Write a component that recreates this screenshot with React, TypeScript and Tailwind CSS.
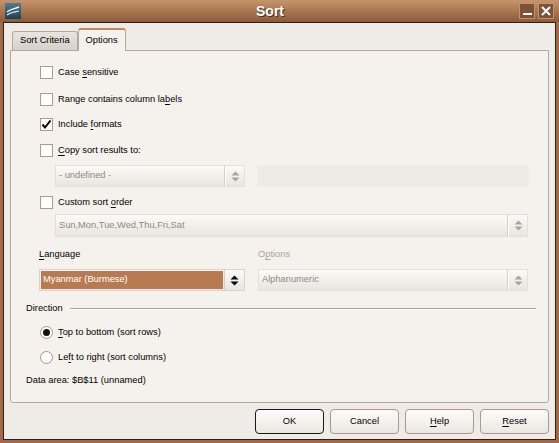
import React from 'react';

const font = { fontFamily: '"Liberation Sans", Arial, sans-serif' };

function U({ children }: { children: React.ReactNode }) {
  return <span className="underline underline-offset-[2px]">{children}</span>;
}

function Checkbox({ checked, children }: { checked?: boolean; children: React.ReactNode }) {
  return (
    <div className="flex items-center h-[13px] ml-[29px]">
      <div className="w-[13px] h-[13px] border border-[#b09a86] bg-white flex items-center justify-center">
        {checked && (
          <svg width="11" height="11" viewBox="0 0 11 11">
            <path d="M1.5 5.5 L4 8.5 L9.5 1.5" stroke="#000" strokeWidth="2" fill="none" />
          </svg>
        )}
      </div>
      <span className="ml-[5px] text-black">{children}</span>
    </div>
  );
}

function Radio({ checked, children }: { checked?: boolean; children: React.ReactNode }) {
  return (
    <div className="flex items-center h-[13px] ml-[29px]">
      <div className="w-[13px] h-[13px] rounded-full border border-[#a89684] bg-white flex items-center justify-center">
        {checked && <div className="w-[7px] h-[7px] rounded-full bg-[#111]" />}
      </div>
      <span className="ml-[5px] text-black">{children}</span>
    </div>
  );
}

function Arrows({ dark }: { dark?: boolean }) {
  const c = dark ? '#000' : '#aaa49c';
  return (
    <svg width="9" height="11" viewBox="0 0 9 11">
      <path d="M4.5 0.5 L8.5 4.5 L0.5 4.5 Z" fill={c} />
      <path d="M4.5 10.5 L8.5 6.5 L0.5 6.5 Z" fill={c} />
    </svg>
  );
}

function Combo({ text, width, height = 22 }: { text: string; width: number; height?: number }) {
  return (
    <div
      className="flex border border-[#e4dfd8] bg-gradient-to-b from-[#fbfaf8] to-[#e9e5e0]"
      style={{ width, height }}
    >
      <div className="flex-1 flex items-center pl-[3px] text-[#8e8982]">{text}</div>
      <div className="w-[19px] border-l border-l-[#ffffff] shadow-[-1px_0_0_#d4cec6] flex items-center justify-center">
        <Arrows />
      </div>
    </div>
  );
}

function Btn({ children, def }: { children: React.ReactNode; def?: boolean }) {
  return (
    <div
      className={`w-[69px] h-[25px] rounded-[4px] border flex items-center justify-center bg-gradient-to-b from-[#fdfcfb] to-[#ebe7e2] text-black ${
        def ? 'border-[#1a1a1a]' : 'border-[#a89a8b]'
      }`}
    >
      {children}
    </div>
  );
}

export default function App() {
  return (
    <div
      className="w-[559px] h-[443px] flex flex-col bg-[#a06a48] text-[9.3px] leading-none"
      style={font}
    >
      {/* title bar */}
      <div className="h-[22px] flex items-center bg-gradient-to-b from-[#c8946c] to-[#8a5a3b] px-[5px]">
        <svg width="16" height="16" viewBox="0 0 16 16">
          <defs>
            <linearGradient id="ic" x1="0" y1="0" x2="0" y2="1">
              <stop offset="0" stopColor="#4f7f90" />
              <stop offset="1" stopColor="#1e4050" />
            </linearGradient>
          </defs>
          <rect x="0" y="0" width="16" height="16" fill="url(#ic)" />
          <path d="M2 9 C5 6 9 6 14 4" stroke="#fff" strokeWidth="1.4" fill="none" />
          <path d="M2 12 C6 9 10 9 14 8" stroke="#dfeaee" strokeWidth="1.2" fill="none" />
        </svg>
        <div className="flex-1 text-center text-white font-bold text-[14px] [text-shadow:1px_1px_0_#4a2e1c]">
          Sort
        </div>
        <div className="flex gap-[3px]">
          <div className="w-[16px] h-[16px] bg-[#7e5236] border border-[#c29272] flex items-end justify-center pb-[3px]">
            <div className="w-[9px] h-[2px] bg-white" />
          </div>
          <div className="w-[16px] h-[16px] bg-[#7e5236] border border-[#c29272] flex items-center justify-center">
            <svg width="10" height="10" viewBox="0 0 10 10">
              <path d="M1 1 L9 9 M9 1 L1 9" stroke="#fff" strokeWidth="2" />
            </svg>
          </div>
        </div>
      </div>

      {/* client area */}
      <div className="flex-1 mx-[3px] mb-[3px] border border-[#2e2018] bg-[#efebe7] flex flex-col px-[6px] pt-[5px]">
        {/* tabs */}
        <div className="flex items-end h-[22px] pl-[2px]">
          <div className="h-[19px] px-[7px] flex items-center border border-[#b3aa9e] border-b-0 rounded-t-[3px] bg-gradient-to-b from-[#e8e4df] to-[#d6d0c9] text-black">
            Sort Criteria
          </div>
          <div className="h-[23px] px-[7px] flex items-center border border-[#b3aa9e] border-t-[2px] border-t-[#c6875e] border-b-0 rounded-t-[3px] bg-[#f5f2ee] text-black -mb-[1px] relative">
            Options
          </div>
        </div>

        {/* panel */}
        <div className="h-[353px] border border-[#b3aa9e] bg-[#f5f2ee] flex flex-col pt-[15px] rounded-b-[3px]">
          <Checkbox>
            Case <U>s</U>ensitive
          </Checkbox>
          <div className="mt-[14px]">
            <Checkbox>
              Range contains column la<U>b</U>els
            </Checkbox>
          </div>
          <div className="mt-[12px]">
            <Checkbox checked>
              Include <U>f</U>ormats
            </Checkbox>
          </div>
          <div className="mt-[13px]">
            <Checkbox>
              <U>C</U>opy sort results to:
            </Checkbox>
          </div>
          <div className="mt-[8px] ml-[44px] flex gap-[12px]">
            <Combo text="- undefined -" width={190} />
            <div className="w-[272px] h-[22px] bg-[#ede9e4] border border-[#f0ede9]" />
          </div>
          <div className="mt-[9px]">
            <Checkbox>
              Custom sort <U>o</U>rder
            </Checkbox>
          </div>
          <div className="mt-[5px] ml-[44px]">
            <Combo text="Sun,Mon,Tue,Wed,Thu,Fri,Sat" width={473} height={23} />
          </div>
          <div className="mt-[12px] ml-[28px] h-[12px] flex items-center">
            <div className="w-[219px] text-black">
              <U>L</U>anguage
            </div>
            <div className="text-[#aaa49c]">
              O<U>p</U>tions
            </div>
          </div>
          <div className="mt-[8px] ml-[28px] flex gap-[13px]">
            <div className="w-[206px] h-[22px] flex border border-[#d8d2ca] bg-gradient-to-b from-[#fbfaf8] to-[#e9e5e0]">
              <div className="flex-1 m-[1px] bg-[#b97a51] text-white flex items-center pl-[2px]">
                Myanmar (Burmese)
              </div>
              <div className="w-[20px] border-l border-l-[#d4cec6] flex items-center justify-center">
                <Arrows dark />
              </div>
            </div>
            <Combo text="Alphanumeric" width={270} />
          </div>
          <div className="mt-[12px] ml-[15px] h-[12px] flex items-center">
            <span className="text-black">Direction</span>
            <div className="ml-[7px] w-[466px] h-0 border-t border-t-[#a8a29a] border-b border-b-white" />
          </div>
          <div className="mt-[11px]">
            <Radio checked>
              <U>T</U>op to bottom (sort rows)
            </Radio>
          </div>
          <div className="mt-[12px]">
            <Radio>
              Le<U>f</U>t to right (sort columns)
            </Radio>
          </div>
          <div className="mt-[11px] ml-[15px] h-[12px] flex items-center text-black">
            Data area: $B$11 (unnamed)
          </div>
        </div>

        {/* buttons */}
        <div className="mt-[6px] flex justify-end gap-[6px]">
          <Btn def>OK</Btn>
          <Btn>Cancel</Btn>
          <Btn>
            <U>H</U>elp
          </Btn>
          <Btn>
            <U>R</U>eset
          </Btn>
        </div>
      </div>
    </div>
  );
}
